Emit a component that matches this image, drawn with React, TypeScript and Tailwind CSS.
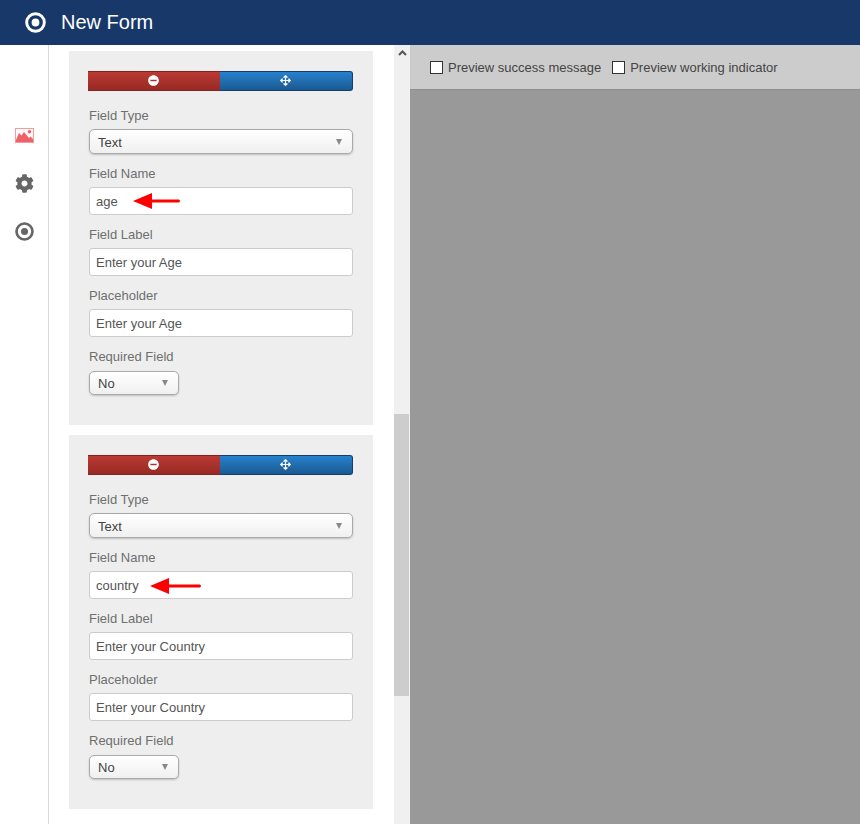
import { FaArrowsAlt, FaCog, FaMinusCircle } from "react-icons/fa";

function RedArrow({ left, top, length }: { left: number; top: number; length: number }) {
  return (
    <svg
      className="absolute"
      style={{ left, top }}
      width={length}
      height="18"
      viewBox={`0 0 ${length} 18`}
    >
      <path
        d={`M0 9 L19 1 L19 7.5 L${length - 2} 7.5 Q${length} 9 ${length - 2} 10.5 L19 10.5 L19 17 Z`}
        fill="#ff0000"
      />
    </svg>
  );
}

function TargetIcon({ size }: { size: number }) {
  return (
    <svg width={size} height={size} viewBox="0 0 20 20" fill="none">
      <circle cx="10" cy="10" r="8.4" stroke="currentColor" strokeWidth="2.8" />
      <circle cx="10" cy="10" r="3.7" fill="currentColor" />
    </svg>
  );
}

function Caret() {
  return <span className="h-0 w-0 border-x-[3.5px] border-t-[6px] border-x-transparent border-t-[#888]" />;
}

function SelectBox({ value, small }: { value: string; small?: boolean }) {
  return (
    <div
      className={`ml-px flex items-center justify-between rounded-[5px] border border-[#aaa] bg-gradient-to-b from-white to-[#f0f0f0] pl-2 pr-[10px] text-[13px] text-[#444] shadow-[0_1px_2px_rgba(0,0,0,0.2)] ${
        small ? "h-[24px] w-[90px]" : "h-[25px] w-[264px]"
      }`}
    >
      <span className="pt-[2px]">{value}</span>
      <Caret />
    </div>
  );
}

function TextBox({ value, arrow }: { value: string; arrow?: { left: number; top: number; length: number } }) {
  return (
    <div className="relative ml-px flex h-[28px] w-[264px] items-center rounded-[3px] border border-[#ccc] bg-white pl-[6px] pt-[2px] text-[13px] text-[#555]">
      {value}
      {arrow && <RedArrow {...arrow} />}
    </div>
  );
}

function Label({ text, className }: { text: string; className: string }) {
  return <div className={`h-[16px] pl-px text-[13px] leading-[18px] text-[#6f6f6f] ${className}`}>{text}</div>;
}

function FieldCard({
  name,
  title,
  arrow,
}: {
  name: string;
  title: string;
  arrow: { left: number; top: number; length: number };
}) {
  return (
    <div className="h-[374px] w-[304px] bg-[#eeeeee] pl-[19px] pt-[20px]">
      <div className="flex h-[20px] w-[265px] text-[11px] text-white">
        <div className="flex w-[132px] items-center justify-center border-y border-y-[#7f2420] bg-gradient-to-b from-[#bb3a33] to-[#962a25] pb-[2px] pr-px">
          <FaMinusCircle />
        </div>
        <div className="flex w-[133px] items-center justify-center rounded-r-[3px] border-y border-r border-[#123f6f] bg-gradient-to-b from-[#2681cc] to-[#1b5a92] pb-[2px] pr-px">
          <FaArrowsAlt />
        </div>
      </div>
      <Label text="Field Type" className="mt-[16px] mb-[6px]" />
      <SelectBox value="Text" />
      <Label text="Field Name" className="mt-[11px] mb-[6px]" />
      <TextBox value={name} arrow={arrow} />
      <Label text="Field Label" className="mt-[11px] mb-[6px]" />
      <TextBox value={`Enter your ${title}`} />
      <Label text="Placeholder" className="mt-[11px] mb-[6px]" />
      <TextBox value={`Enter your ${title}`} />
      <Label text="Required Field" className="mt-[11px] mb-[7px]" />
      <SelectBox value="No" small />
    </div>
  );
}

function PreviewCheck({ label }: { label: string }) {
  return (
    <label className="flex items-center gap-[5px]">
      <span className="h-[13px] w-[13px] border border-[#333] bg-white" />
      <span className="pt-[2px]">{label}</span>
    </label>
  );
}

export default function App() {
  return (
    <div className="flex h-[824px] w-[860px] flex-col overflow-hidden bg-white font-['Liberation_Sans',Arial,sans-serif]">
      <header className="flex h-[45px] shrink-0 items-center bg-[#18386a] pl-[25px] text-white">
        <TargetIcon size={21} />
        <span className="mb-[2px] ml-[15px] text-[20px]">New Form</span>
      </header>
      <div className="flex min-h-0 flex-1">
        <aside className="flex w-[49px] shrink-0 flex-col items-center border-r border-[#d9d9d9] pt-[83px] text-[#666]">
          <svg width="19" height="15" viewBox="0 0 19 15">
            <rect x="0.5" y="0.5" width="18" height="14" fill="#fffafa" stroke="#f49aa0" />
            <path d="M1 14 L1 12 L4 5 L6.5 7.5 L9 4 L14 10 L15.5 8.5 L18 11 L18 14 Z" fill="#ee6167" />
            <circle cx="14.5" cy="3.8" r="1.8" fill="#ee6167" />
          </svg>
          <FaCog className="mt-[31px] text-[19px]" />
          <div className="mt-[29px]">
            <TargetIcon size={19} />
          </div>
        </aside>
        <main className="flex w-[345px] shrink-0 flex-col gap-[10px] overflow-hidden pl-[20px] pt-[6px]">
          <FieldCard name="age" title="Age" arrow={{ left: 43, top: 4, length: 48 }} />
          <FieldCard name="country" title="Country" arrow={{ left: 60, top: 5, length: 52 }} />
        </main>
        <div className="flex w-[16px] shrink-0 flex-col bg-[#f0f0f0]">
          <div className="flex h-[369px] justify-center pt-[5px]">
            <svg width="9" height="6" viewBox="0 0 9 6">
              <path d="M1 5 L4.5 1.5 L8 5" fill="none" stroke="#555" strokeWidth="2" />
            </svg>
          </div>
          <div className="h-[282px] w-[15px] bg-[#cdcdcd]" />
        </div>
        <section className="flex min-w-0 flex-1 flex-col bg-[#999999]">
          <div className="flex h-[45px] items-center gap-[11px] border-b border-[#8e8e8e] bg-[#cccccc] pl-[20px] text-[13px] text-[#444]">
            <PreviewCheck label="Preview success message" />
            <PreviewCheck label="Preview working indicator" />
          </div>
        </section>
      </div>
    </div>
  );
}
